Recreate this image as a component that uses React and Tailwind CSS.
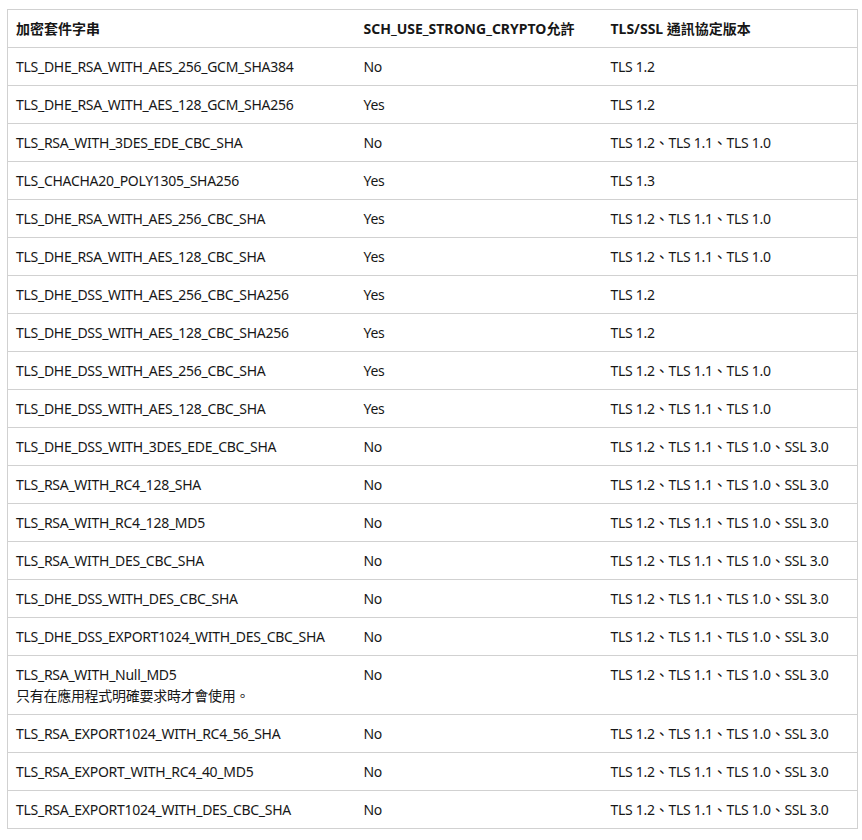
const rows = [
  ['TLS_DHE_RSA_WITH_AES_256_GCM_SHA384', 'No', 'TLS 1.2'],
  ['TLS_DHE_RSA_WITH_AES_128_GCM_SHA256', 'Yes', 'TLS 1.2'],
  ['TLS_RSA_WITH_3DES_EDE_CBC_SHA', 'No', 'TLS 1.2、TLS 1.1、TLS 1.0'],
  ['TLS_CHACHA20_POLY1305_SHA256', 'Yes', 'TLS 1.3'],
  ['TLS_DHE_RSA_WITH_AES_256_CBC_SHA', 'Yes', 'TLS 1.2、TLS 1.1、TLS 1.0'],
  ['TLS_DHE_RSA_WITH_AES_128_CBC_SHA', 'Yes', 'TLS 1.2、TLS 1.1、TLS 1.0'],
  ['TLS_DHE_DSS_WITH_AES_256_CBC_SHA256', 'Yes', 'TLS 1.2'],
  ['TLS_DHE_DSS_WITH_AES_128_CBC_SHA256', 'Yes', 'TLS 1.2'],
  ['TLS_DHE_DSS_WITH_AES_256_CBC_SHA', 'Yes', 'TLS 1.2、TLS 1.1、TLS 1.0'],
  ['TLS_DHE_DSS_WITH_AES_128_CBC_SHA', 'Yes', 'TLS 1.2、TLS 1.1、TLS 1.0'],
  ['TLS_DHE_DSS_WITH_3DES_EDE_CBC_SHA', 'No', 'TLS 1.2、TLS 1.1、TLS 1.0、SSL 3.0'],
  ['TLS_RSA_WITH_RC4_128_SHA', 'No', 'TLS 1.2、TLS 1.1、TLS 1.0、SSL 3.0'],
  ['TLS_RSA_WITH_RC4_128_MD5', 'No', 'TLS 1.2、TLS 1.1、TLS 1.0、SSL 3.0'],
  ['TLS_RSA_WITH_DES_CBC_SHA', 'No', 'TLS 1.2、TLS 1.1、TLS 1.0、SSL 3.0'],
  ['TLS_DHE_DSS_WITH_DES_CBC_SHA', 'No', 'TLS 1.2、TLS 1.1、TLS 1.0、SSL 3.0'],
  ['TLS_DHE_DSS_EXPORT1024_WITH_DES_CBC_SHA', 'No', 'TLS 1.2、TLS 1.1、TLS 1.0、SSL 3.0'],
  ['TLS_RSA_WITH_Null_MD5', 'No', 'TLS 1.2、TLS 1.1、TLS 1.0、SSL 3.0', '只有在應用程式明確要求時才會使用。'],
  ['TLS_RSA_EXPORT1024_WITH_RC4_56_SHA', 'No', 'TLS 1.2、TLS 1.1、TLS 1.0、SSL 3.0'],
  ['TLS_RSA_EXPORT_WITH_RC4_40_MD5', 'No', 'TLS 1.2、TLS 1.1、TLS 1.0、SSL 3.0'],
  ['TLS_RSA_EXPORT1024_WITH_DES_CBC_SHA', 'No', 'TLS 1.2、TLS 1.1、TLS 1.0、SSL 3.0'],
];

export default function App() {
  return (
    <div
      className="bg-white min-h-[840px] pt-[9px] pl-[7px] text-[14px] leading-[21px] text-[#171717]"
      style={{ fontFamily: '"Noto Sans", "Noto Sans CJK TC", sans-serif' }}
    >
      <table className="w-[851px] border-collapse border border-[#d1d1d1] text-left">
        <thead>
          <tr className="border-b border-[#d1d1d1]">
            <th className="w-[348px] px-2 py-2 font-bold align-top">加密套件字串</th>
            <th className="w-[247px] px-2 py-2 font-bold align-top">SCH_USE_STRONG_CRYPTO允許</th>
            <th className="px-2 py-2 font-bold align-top">TLS/SSL 通訊協定版本</th>
          </tr>
        </thead>
        <tbody className="tracking-[-0.28px]">
          {rows.map(([suite, strong, versions, note]) => (
            <tr key={suite} className="border-b border-[#d1d1d1]">
              <td className="px-2 py-2 align-top">
                {suite}
                {note && <div>{note}</div>}
              </td>
              <td className="px-2 py-2 align-top">{strong}</td>
              <td className="px-2 py-2 align-top">{versions}</td>
            </tr>
          ))}
        </tbody>
      </table>
    </div>
  );
}
